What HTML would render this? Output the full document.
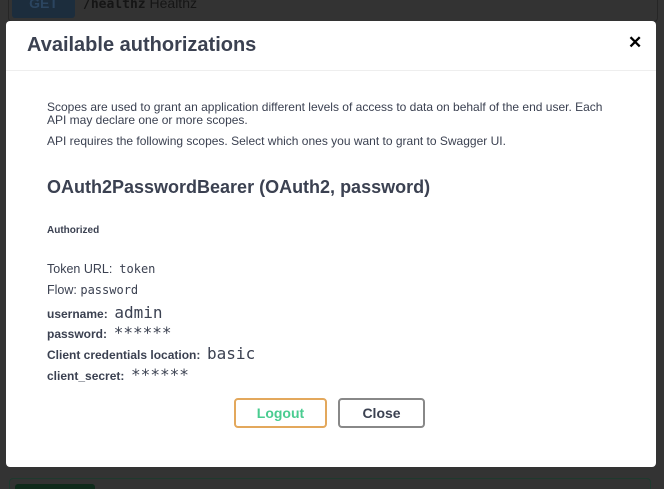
<!DOCTYPE html>
<html><head><style>
html,body{margin:0;width:664px;height:489px;overflow:hidden}
body{background:#333;position:relative;font-family:"Liberation Sans",sans-serif;color:#3b4151}
.get{position:absolute;left:12px;top:-8px;width:63px;height:26px;background:#1c2d3d;border-radius:3px;color:#2b4560;font-weight:bold;font-size:14px;text-align:center;line-height:22px}
.path{position:absolute;left:83px;top:-5px;font-size:14px;color:#151515}
.op{position:absolute;left:8px;top:-10px;width:648px;height:30px;border:1px solid #262626;border-radius:4px}
.bot{position:absolute;left:9px;top:478px;width:640px;height:30px;border:1px solid #1e3a2e;border-radius:4px}
.botb{position:absolute;left:15px;top:484px;width:80px;height:10px;background:#0f2a1b;border-radius:3px}
.modal{position:absolute;left:6px;top:21px;width:650px;height:446px;background:#fff;border-radius:4px}
.hdr{height:49px;border-bottom:1px solid #eee;position:relative}
.hdr h3{margin:0;position:absolute;left:21px;top:13px;font-size:20px;font-weight:bold}
.x{position:absolute;left:622px;top:12px;font-size:17px;font-weight:bold;color:#000}
.t{position:absolute;left:41px;font-size:12px;line-height:13px}
.m{font-family:"DejaVu Sans Mono",monospace}
.btn{position:absolute;top:377px;height:26px;border:2px solid;border-radius:4px;font-weight:bold;font-size:14px;text-align:center;line-height:26px;box-sizing:content-box}
</style></head><body>
<div class="op"></div>
<div class="get">GET</div>
<div class="path"><b class="m" style="font-size:13px">/healthz</b> Healthz</div>
<div class="bot"></div><div class="botb"></div>
<div class="modal">
<div class="hdr"><h3>Available authorizations</h3><div class="x">✕</div></div>
<div class="t" style="top:80px;width:570px">Scopes are used to grant an application different levels of access to data on behalf of the end user. Each API may declare one or more scopes.</div>
<div class="t" style="top:114px">API requires the following scopes. Select which ones you want to grant to Swagger UI.</div>
<div class="t" style="top:155px;font-size:18px;font-weight:bold;line-height:22px">OAuth2PasswordBearer (OAuth2, password)</div>
<div class="t" style="top:203px;font-size:10px;font-weight:bold">Authorized</div>
<div class="t" style="top:242px;font-size:12.5px">Token URL:&nbsp; <span class="m" style="font-size:12px">token</span></div>
<div class="t" style="top:263px;font-size:12.5px">Flow: <span class="m" style="font-size:12px">password</span></div>
<div class="t" style="top:285px;font-size:12px;font-weight:bold">username:&nbsp; <span class="m" style="font-size:16px;font-weight:normal">admin</span></div>
<div class="t" style="top:305px;font-size:12px;font-weight:bold">password:&nbsp; <span class="m" style="font-size:16px;font-weight:normal">******</span></div>
<div class="t" style="top:326px;font-size:12px;font-weight:bold">Client credentials location:&nbsp; <span class="m" style="font-size:16px;font-weight:normal">basic</span></div>
<div class="t" style="top:347px;font-size:12px;font-weight:bold">client_secret:&nbsp; <span class="m" style="font-size:16px;font-weight:normal">******</span></div>
<div class="btn" style="left:228px;width:89px;border-color:#e3a85c;color:#49cc90">Logout</div>
<div class="btn" style="left:332px;width:83px;border-color:#888;color:#3b4151">Close</div>
</div>
</body></html>
